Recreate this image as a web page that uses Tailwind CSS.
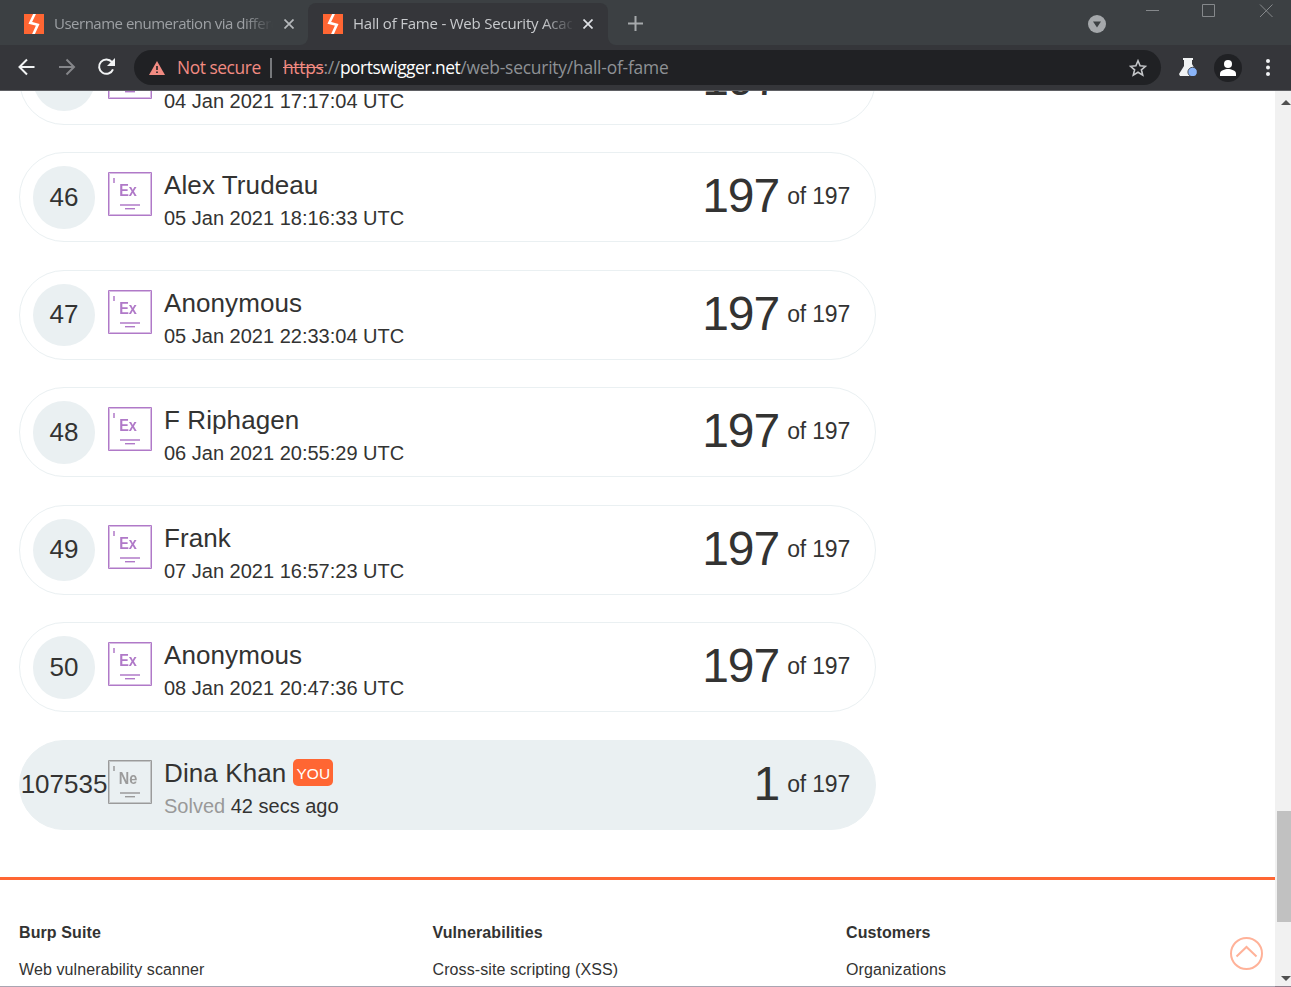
<!DOCTYPE html>
<html lang="en">
<head>
<meta charset="utf-8">
<title>Hall of Fame - Web Security Academy</title>
<script src="https://cdn.jsdelivr.net/npm/@tailwindcss/browser@4"></script>
</head>
<body class="w-[1291px] h-[987px] overflow-hidden bg-white font-['Liberation_Sans',Arial,sans-serif] text-[#333332]">
<svg class="hidden">
  <symbol id="burp" viewBox="0 0 20 20"><path fill="#ff6633" d="M0 0h20v20H0z"/><path fill="none" stroke="#fff" stroke-width="2.600" d="M10.800-.5L6.300 8.800l7.400 2L9.300 20.500"/></symbol>
  <symbol id="badge" viewBox="0 0 44 44"><path d="M.5.500h43v43H.5z" fill="none" stroke="currentColor"/><path d="M1.500 1.500h41v41h-41z" fill="none" stroke="currentColor" opacity=".5"/><path d="M5 6h2v5H5zM12 32h20v2H12z" fill="currentColor" opacity=".75"/><path d="M17 36h10v1H17z" fill="currentColor"/><path d="M17 37h10v1H17z" fill="currentColor" opacity=".4"/></symbol>
</svg>
<div class="flex flex-col h-full">
  <header class="h-[91px] shrink-0 bg-[#35363a] border-b border-[#5f6064] font-['Open_Sans','Noto_Sans',sans-serif]">
    <div class="flex h-[45px] bg-[#3c4043]">
      <div class="w-[308px] bg-[#35363a]">
        <div class="flex items-center h-full w-full pt-[3px] pl-6 rounded-br-[8px] bg-[#3c4043]">
          <svg class="size-5 shrink-0"><use href="#burp"/></svg>
          <div class="ml-[10px] w-[219px] pb-[2px] overflow-hidden whitespace-nowrap text-[15px] leading-5 text-[#9da0a4] tracking-[-0.5px] [mask-image:linear-gradient(to_right,black_190px,transparent_219px)]">Username enumeration via different</div>
          <svg class="ml-[11px] size-[10px] -mt-px" viewBox="0 0 10 10"><path d="M.5.500l9 9m0-9l-9 9" stroke="#b5b8bb" stroke-width="1.700"/></svg>
        </div>
      </div>
      <div class="w-[300px] pt-[3px]">
        <div class="flex items-center h-[42px] w-full pl-[15px] rounded-t-[8px] bg-[#35363a]">
          <svg class="size-5 shrink-0"><use href="#burp"/></svg>
          <div class="ml-[10px] w-[219px] pb-[2px] overflow-hidden whitespace-nowrap text-[15px] leading-5 text-[#c8cacd] tracking-[-0.21px] [mask-image:linear-gradient(to_right,black_190px,transparent_222px)]">Hall of Fame - Web Security Academy</div>
          <svg class="ml-[11px] size-[10px] -mt-px" viewBox="0 0 10 10"><path d="M.5.500l9 9m0-9l-9 9" stroke="#dfe1e5" stroke-width="1.700"/></svg>
        </div>
      </div>
      <div class="flex flex-1 bg-[#35363a]">
        <div class="flex flex-1 rounded-bl-[8px] bg-[#3c4043]">
          <svg class="ml-5 mt-4 size-[15px]" viewBox="0 0 15 15"><path d="M7.500 0v15M0 7.500h15" stroke="#a6a9ac" stroke-width="2"/></svg>
          <svg class="ml-[445px] mt-[15px] size-[18px]" viewBox="0 0 18 18"><circle cx="9" cy="9" r="9" fill="#a5a8ab"/><path d="M5 6.500h8L9 12.500z" fill="#3c4043"/></svg>
          <svg class="ml-10 mt-1 w-[127px] h-[14px]" viewBox="0 0 127 14" fill="none" stroke="#85888b"><path d="M0 6.500h13M56.500.500h12v12h-12zM114 .500l12.500 12.500M126.500.500L114 13"/></svg>
        </div>
      </div>
    </div>
    <div class="flex items-center h-[45px]">
      <svg class="ml-[18px] -mt-px w-[98px] h-[18px]" viewBox="0 0 98 18" fill="none" stroke-width="2"><path d="M16.500 9H2M9 1.500L1.500 9 9 16.500" stroke="#f1f3f4"/><path d="M41 9h14.500M48.500 1.500L56 9l-7.500 7.500" stroke="#85868a"/><path d="M94 4.200A7.200 7.200 0 1 0 95 11.300" stroke="#f1f3f4"/><path d="M97 0v8h-8z" fill="#f1f3f4"/></svg>
      <div class="flex items-center ml-[18px] w-[1027px] h-[35px] rounded-full bg-[#202124] text-[17.400px] whitespace-nowrap">
        <svg class="ml-[15px] mt-px w-4 h-[14px]" viewBox="0 0 16 14"><path d="M8 0l8 14H0z" fill="#f28b82"/><path d="M7.200 5h1.600v4H7.200zM7.200 10.500h1.600v1.600H7.200z" fill="#202124"/></svg>
        <span class="ml-3 w-[93px] text-[#f28b82] tracking-[-0.450px]">Not secure</span>
        <span class="w-[2px] h-5 bg-[#77797c]"></span>
        <span class="ml-[11px] text-[#8e9195] tracking-[-0.3px]"><span class="text-[#f28b82] line-through">https</span>://<span class="text-white tracking-[-0.480px]">portswigger.net</span><span class="tracking-[-0.210px]">/web-security/hall-of-fame</span></span>
        <svg class="ml-auto mr-[14px] size-[18px]" viewBox="0 0 18 18"><path d="M9 1.800l2.100 5 5.400.500-4.100 3.500 1.300 5.300L9 13.300l-4.700 2.800 1.300-5.300L1.500 7.300l5.400-.5z" fill="none" stroke="#c4c6c9" stroke-width="1.600"/></svg>
      </div>
      <svg class="ml-[18px] -mt-px size-[18px]" viewBox="0 0 18 18"><path d="M4 0h10v2h-1v4l4 7v5H1l-1-2 5-8V2H4z" fill="#f1f3f4"/><circle cx="13.600" cy="14" r="4.700" fill="#8ab4f8" stroke="#35363a" stroke-width=".8"/></svg>
      <svg class="ml-[17px] size-7" viewBox="0 0 28 28"><circle cx="14" cy="14" r="14" fill="#202124"/><circle cx="14" cy="10" r="4" fill="#fff"/><path d="M6 22v-2.500c0-3 5-4.500 8-4.500s8 1.500 8 4.500V22z" fill="#fff"/></svg>
      <svg class="ml-6 w-1 h-[17px]" viewBox="0 0 4 17" fill="#f1f3f4"><circle cx="2" cy="2" r="2"/><circle cx="2" cy="8.500" r="2"/><circle cx="2" cy="15" r="2"/></svg>
    </div>
  </header>
  <div class="flex flex-1 min-h-0">
    <main class="relative w-[1275px] h-[896px] overflow-hidden border-b border-[#aaa5b2]">
      <div id="rows" class="flex flex-col gap-[27.500px] mt-[-56.500px] ml-[19px] w-[857px]"></div>
      <footer class="mt-[47.500px] border-t-3 border-[#ff6633] pl-[19px] pt-[43px] grid grid-cols-[413.500px_413.500px_1fr] gap-y-[17px] text-[16px] leading-5 tracking-[0.1px]">
        <b>Burp Suite</b><b>Vulnerabilities</b><b>Customers</b>
        <span>Web vulnerability scanner</span><span>Cross-site scripting (XSS)</span><span>Organizations</span>
      </footer>
      <svg class="absolute left-[1230px] top-[846px] size-[33px]" viewBox="0 0 33 33" fill="none" stroke="#ffb299" stroke-width="2"><circle cx="16.500" cy="16.500" r="15.500"/><path d="M6.500 19.500l10-9.500 10 9.500"/></svg>
    </main>
    <aside class="flex flex-col w-4 h-[896px] bg-[#f1f1f1] border-b border-[#8f7f8d]">
      <svg class="ml-[6px] mt-[9px] w-[10px] h-[5px]" viewBox="0 0 10 5"><path d="M0 5l5-5 5 5z" fill="#505050"/></svg>
      <div class="mt-[706px] ml-[2px] h-[111px] bg-[#c1c1c1]"></div>
      <svg class="ml-[6px] mt-[54px] w-[10px] h-[5px]" viewBox="0 0 10 5"><path d="M0 0l5 5 5-5z" fill="#505050"/></svg>
    </aside>
  </div>
</div>
<script>
const people = [
  ['45', 'Anonymous', '04 Jan 2021 17:17:04 UTC'],
  ['46', 'Alex Trudeau', '05 Jan 2021 18:16:33 UTC'],
  ['47', 'Anonymous', '05 Jan 2021 22:33:04 UTC'],
  ['48', 'F Riphagen', '06 Jan 2021 20:55:29 UTC'],
  ['49', 'Frank', '07 Jan 2021 16:57:23 UTC'],
  ['50', 'Anonymous', '08 Jan 2021 20:47:36 UTC'],
  ['107535', 'Dina Khan', '<span class="text-[#999999]">Solved</span> 42 secs ago', true]
];
document.getElementById('rows').innerHTML = people.map(([rank, name, when, me]) => `
<div class="flex h-[90px] shrink-0 rounded-[45px] border border-[#eaf0f2] whitespace-nowrap ${me ? 'bg-[#eaf0f2]' : ''}">
  <div class="flex items-center justify-center ml-[13px] mt-[13px] w-[62px] h-[62.500px] shrink-0 rounded-full bg-[#eaf0f2] text-[26px]"><span>${rank}</span></div>
  <div class="relative ml-[13px] mt-[19px] size-[44px] shrink-0 ${me ? 'text-[#9b9b9b]' : 'text-[#b079c8]'}">
    <svg class="size-[44px]"><use href="#badge"/></svg>
    <b class="absolute inset-x-0 top-[9px] -ml-[4px] text-center text-[17px] leading-5 scale-x-[.85]">${me ? 'Ne' : 'Ex'}</b>
  </div>
  <div class="ml-3 mt-[14px] flex-1">
    <div class="flex h-9 items-center text-[26px] leading-9 tracking-[0.1px]">${name}${me ? '<span class="ml-[7px] w-[40px] h-[27px] rounded-[5px] bg-[#ff6633] text-center text-[15.500px] leading-[29px] text-white">YOU</span>' : ''}</div>
    <div class="text-[20px] leading-[30px]">${when}</div>
  </div>
  <div class="flex h-[86px] items-center mr-[25px]"><span class="text-[48px] leading-[56px] tracking-[-1px]">${me ? '1' : '197'}</span><span class="ml-[8px] text-[23px] leading-7 tracking-[-0.2px]">of 197</span></div>
</div>`).join('');
</script>
</body>
</html>
